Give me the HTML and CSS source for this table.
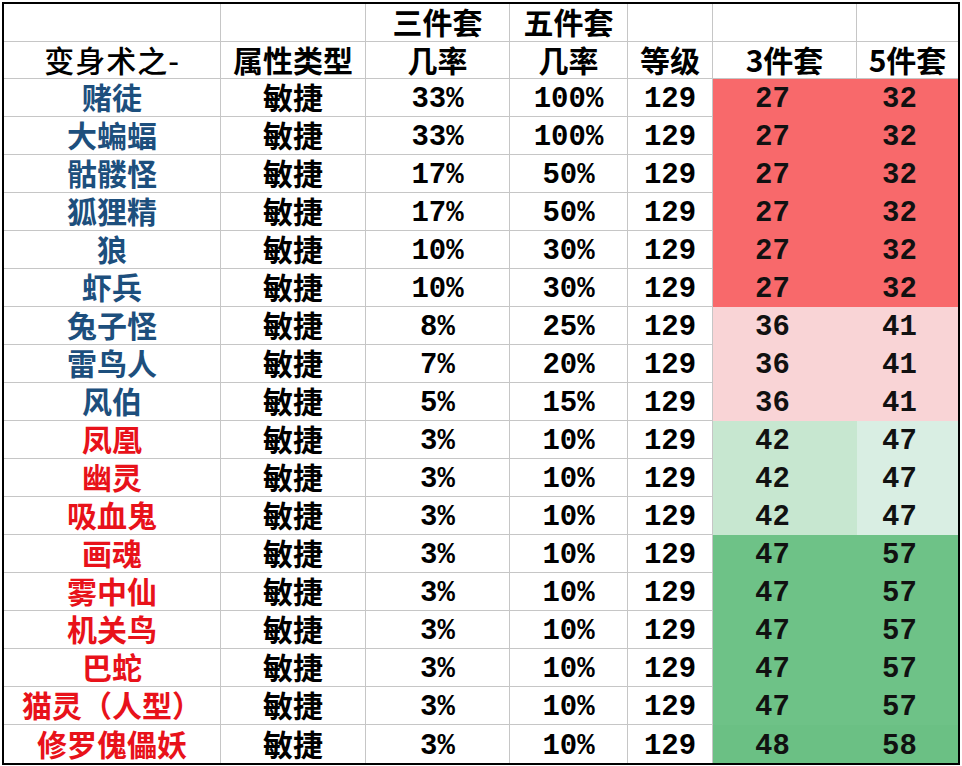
FILE: index.html
```html
<!DOCTYPE html>
<html lang="zh-CN">
<head>
<meta charset="utf-8">
<link rel="stylesheet" href="styles.css">
</head>
<body>
<div class="sheet">
  <div class="c"></div><div class="c"></div><div class="c h">三件套</div><div class="c h">五件套</div><div class="c"></div><div class="c"></div><div class="c last"></div>
  <div class="c h thin">变身术之-</div><div class="c h">属性类型</div><div class="c h">几率</div><div class="c h">几率</div><div class="c h">等级</div><div class="c h">3件套</div><div class="c h last">5件套</div>

  <div class="c n blue">赌徒</div><div class="c h">敏捷</div><div class="c m">33%</div><div class="c m">100%</div><div class="c m">129</div><div class="c v red a">27</div><div class="c v red b last">32</div>
  <div class="c n blue">大蝙蝠</div><div class="c h">敏捷</div><div class="c m">33%</div><div class="c m">100%</div><div class="c m">129</div><div class="c v red a">27</div><div class="c v red b last">32</div>
  <div class="c n blue">骷髅怪</div><div class="c h">敏捷</div><div class="c m">17%</div><div class="c m">50%</div><div class="c m">129</div><div class="c v red a">27</div><div class="c v red b last">32</div>
  <div class="c n blue">狐狸精</div><div class="c h">敏捷</div><div class="c m">17%</div><div class="c m">50%</div><div class="c m">129</div><div class="c v red a">27</div><div class="c v red b last">32</div>
  <div class="c n blue">狼</div><div class="c h">敏捷</div><div class="c m">10%</div><div class="c m">30%</div><div class="c m">129</div><div class="c v red a">27</div><div class="c v red b last">32</div>
  <div class="c n blue">虾兵</div><div class="c h">敏捷</div><div class="c m">10%</div><div class="c m">30%</div><div class="c m">129</div><div class="c v red a">27</div><div class="c v red b last">32</div>
  <div class="c n blue">兔子怪</div><div class="c h">敏捷</div><div class="c m">8%</div><div class="c m">25%</div><div class="c m">129</div><div class="c v pink a">36</div><div class="c v pink b last">41</div>
  <div class="c n blue">雷鸟人</div><div class="c h">敏捷</div><div class="c m">7%</div><div class="c m">20%</div><div class="c m">129</div><div class="c v pink a">36</div><div class="c v pink b last">41</div>
  <div class="c n blue">风伯</div><div class="c h">敏捷</div><div class="c m">5%</div><div class="c m">15%</div><div class="c m">129</div><div class="c v pink a">36</div><div class="c v pink b last">41</div>
  <div class="c n redt">凤凰</div><div class="c h">敏捷</div><div class="c m">3%</div><div class="c m">10%</div><div class="c m">129</div><div class="c v lg1 a">42</div><div class="c v lg2 b last">47</div>
  <div class="c n redt">幽灵</div><div class="c h">敏捷</div><div class="c m">3%</div><div class="c m">10%</div><div class="c m">129</div><div class="c v lg1 a">42</div><div class="c v lg2 b last">47</div>
  <div class="c n redt">吸血鬼</div><div class="c h">敏捷</div><div class="c m">3%</div><div class="c m">10%</div><div class="c m">129</div><div class="c v lg1 a">42</div><div class="c v lg2 b last">47</div>
  <div class="c n redt">画魂</div><div class="c h">敏捷</div><div class="c m">3%</div><div class="c m">10%</div><div class="c m">129</div><div class="c v green a">47</div><div class="c v green b last">57</div>
  <div class="c n redt">雾中仙</div><div class="c h">敏捷</div><div class="c m">3%</div><div class="c m">10%</div><div class="c m">129</div><div class="c v green a">47</div><div class="c v green b last">57</div>
  <div class="c n redt">机关鸟</div><div class="c h">敏捷</div><div class="c m">3%</div><div class="c m">10%</div><div class="c m">129</div><div class="c v green a">47</div><div class="c v green b last">57</div>
  <div class="c n redt">巴蛇</div><div class="c h">敏捷</div><div class="c m">3%</div><div class="c m">10%</div><div class="c m">129</div><div class="c v green a">47</div><div class="c v green b last">57</div>
  <div class="c n redt">猫灵（人型）</div><div class="c h">敏捷</div><div class="c m">3%</div><div class="c m">10%</div><div class="c m">129</div><div class="c v green a">47</div><div class="c v green b last">57</div>
  <div class="c n redt">修罗傀儡妖</div><div class="c h">敏捷</div><div class="c m">3%</div><div class="c m">10%</div><div class="c m">129</div><div class="c v green2 a">48</div><div class="c v green2 b last">58</div>
</div>
</body>
</html>
```

FILE: styles.css
```css
html, body {
  margin: 0;
  padding: 0;
  background: #ffffff;
}

body {
  padding: 2px;
}

.sheet {
  display: grid;
  grid-template-columns: 217px 145px 144px 118px 85px 144px 101px;
  grid-template-rows: 38px 37px repeat(18, 38px);
  width: 954px;
  border: 2px solid #000000;
  font-family: "Noto Sans CJK SC", "Noto Sans", sans-serif;
  color: #000000;
}

.c {
  display: flex;
  align-items: center;
  justify-content: center;
  border-right: 1px solid #c6c6c6;
  border-bottom: 1px solid #c6c6c6;
  font-size: 30px;
  line-height: 32px;
  padding-bottom: 3px;
  white-space: nowrap;
  min-width: 0;
}

.c.last {
  border-right: none;
}

.c:nth-last-child(-n+7) {
  border-bottom: none;
}

.h {
  font-weight: 700;
}

.thin {
  font-weight: 500;
  letter-spacing: 1px;
}

.n {
  font-weight: 700;
}

.blue {
  color: #1d4f7d;
}

.redt {
  color: #e8121a;
}

.m,
.v {
  font-family: "Liberation Mono", "DejaVu Sans Mono", monospace;
  font-weight: 700;
  font-size: 29px;
  line-height: 30px;
  padding-top: 5px;
  padding-bottom: 0;
}

.v {
  color: #111111;
}

.v.a {
  padding-right: 24px;
}

.v.b {
  padding-right: 16px;
}

.red {
  background: #f8696b;
  border-color: #f8696b;
}

.pink {
  background: #f9d4d6;
  border-color: #f9d4d6;
}

.lg1 {
  background: #c7e7d0;
  border-color: #c7e7d0;
}

.lg2 {
  background: #d9eee3;
  border-color: #d9eee3;
}

.green {
  background: #6ec287;
  border-color: #6ec287;
}

.green2 {
  background: #6bc084;
  border-color: #6bc084;
}
```
